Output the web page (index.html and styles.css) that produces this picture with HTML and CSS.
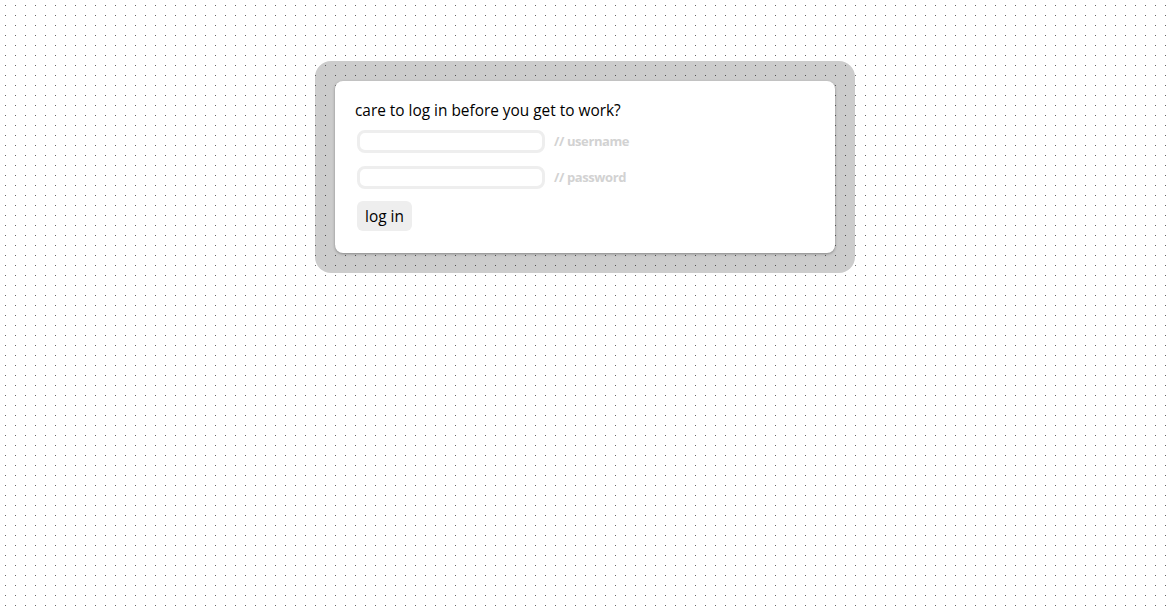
FILE: index.html
```html
<!DOCTYPE html>
<html>
<head>
<meta charset="utf-8">
<link rel="stylesheet" href="styles.css">
</head>
<body>
<div class="frame">
  <form class="card">
    <p class="prompt">care to log in before you get to work?</p>
    <div class="row row-user">
      <input class="field" type="text">
      <span class="hint">// username</span>
    </div>
    <div class="row row-pass">
      <input class="field" type="password">
      <span class="hint">// password</span>
    </div>
    <button class="btn" type="button">log in</button>
  </form>
</div>
</body>
</html>
```

FILE: styles.css
```css
html, body {
  margin: 0;
  padding: 0;
  height: 100%;
}
body {
  box-sizing: border-box;
  padding-right: 1px;
  background-color: #fff;
  background-image: url("data:image/svg+xml,%3Csvg xmlns='http://www.w3.org/2000/svg' width='10' height='10' shape-rendering='crispEdges'%3E%3Crect x='5' y='5' width='1' height='1' fill='%23666'/%3E%3C/svg%3E");
  background-size: 10px 10px;
  font-family: "Open Sans", "Noto Sans", sans-serif;
  color: #000;
}
.frame {
  width: 500px;
  margin: 61px auto 0;
  padding: 20px;
  background: rgba(0, 0, 0, 0.2);
  border-radius: 16px;
}
.card {
  display: flex;
  flex-direction: column;
  align-items: flex-start;
  background: #fff;
  border-radius: 8px;
  padding: 20px 20px 22px;
  box-shadow: 0 1px 3px rgba(0, 0, 0, 0.35);
}
.prompt {
  margin: 0;
  font-size: 15.4px;
  line-height: 20px;
}
.row {
  display: flex;
  align-items: center;
  margin-left: 2px;
}
.row-user {
  margin-top: 9px;
}
.row-pass {
  margin-top: 13px;
}
.hint {
  position: relative;
  top: -1px;
  margin-left: 9px;
  font-size: 13px;
  font-weight: bold;
  color: #d2d2d2;
  letter-spacing: -0.4px;
}
.field {
  box-sizing: border-box;
  width: 188px;
  height: 23px;
  margin: 0;
  border: 3px solid #eee;
  border-radius: 8px;
  background: #fff;
  outline: none;
  padding: 0 6px;
}
.btn {
  margin: 12px 0 0 2px;
  height: 30px;
  width: 55px;
  padding: 0;
  border: none;
  border-radius: 6px;
  background: #eee;
  font-family: inherit;
  font-size: 15.4px;
  color: #000;
}
```
